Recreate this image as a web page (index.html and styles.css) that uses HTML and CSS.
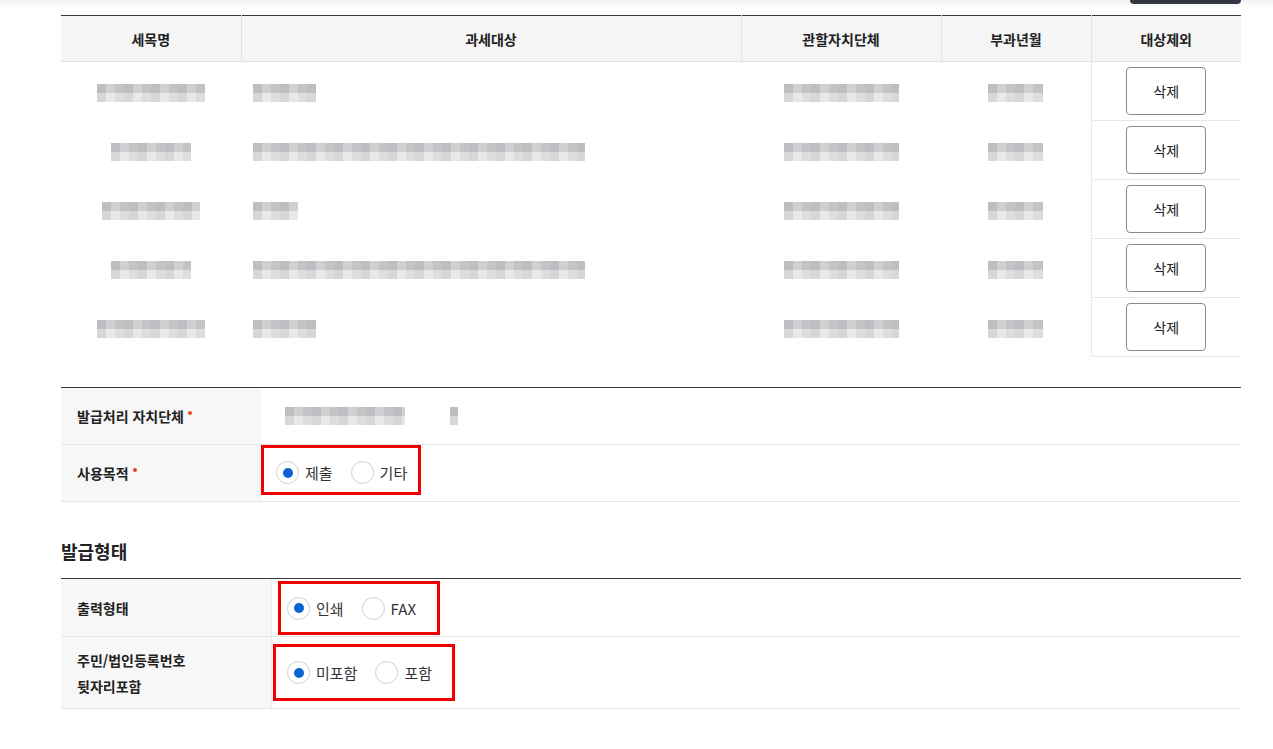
FILE: index.html
```html
<!DOCTYPE html>
<html lang="ko">
<head>
<meta charset="utf-8">
<title>발급</title>
<link rel="stylesheet" href="styles.css">
</head>
<body>
<div class="top-shade"></div>
<div class="page">
  <div class="toolbar">
    <button class="btn-dark" type="button" aria-label="전체삭제"></button>
  </div>

  <table class="list-table">
    <colgroup>
      <col class="c1"><col class="c2"><col class="c3"><col class="c4"><col class="c5">
    </colgroup>
    <thead>
      <tr>
        <th>세목명</th>
        <th>과세대상</th>
        <th>관할자치단체</th>
        <th>부과년월</th>
        <th>대상제외</th>
      </tr>
    </thead>
    <tbody>
      <tr>
        <td class="center"><span class="blur w108"></span></td>
        <td class="left"><span class="blur w63"></span></td>
        <td class="center"><span class="blur w115"></span></td>
        <td class="center"><span class="blur w55"></span></td>
        <td class="act"><button class="btn-del" type="button">삭제</button></td>
      </tr>
      <tr>
        <td class="center"><span class="blur w80"></span></td>
        <td class="left"><span class="blur w332"></span></td>
        <td class="center"><span class="blur w115"></span></td>
        <td class="center"><span class="blur w55"></span></td>
        <td class="act"><button class="btn-del" type="button">삭제</button></td>
      </tr>
      <tr>
        <td class="center"><span class="blur w98"></span></td>
        <td class="left"><span class="blur w45"></span></td>
        <td class="center"><span class="blur w115"></span></td>
        <td class="center"><span class="blur w55"></span></td>
        <td class="act"><button class="btn-del" type="button">삭제</button></td>
      </tr>
      <tr>
        <td class="center"><span class="blur w80"></span></td>
        <td class="left"><span class="blur w332"></span></td>
        <td class="center"><span class="blur w115"></span></td>
        <td class="center"><span class="blur w55"></span></td>
        <td class="act"><button class="btn-del" type="button">삭제</button></td>
      </tr>
      <tr>
        <td class="center"><span class="blur w108"></span></td>
        <td class="left"><span class="blur w63"></span></td>
        <td class="center"><span class="blur w115"></span></td>
        <td class="center"><span class="blur w55"></span></td>
        <td class="act"><button class="btn-del" type="button">삭제</button></td>
      </tr>
    </tbody>
  </table>

  <div class="form-table form-a">
    <div class="frow">
      <div class="flabel">발급처리 자치단체<span class="req"></span></div>
      <div class="fvalue pad-val">
        <span class="blur w120"></span><span class="blur w8 dot-gap"></span>
      </div>
    </div>
    <div class="frow">
      <div class="flabel">사용목적<span class="req"></span></div>
      <div class="fvalue top">
        <div class="mark mark-a">
          <label class="radio"><span class="circle on"></span>제출</label>
          <label class="radio"><span class="circle"></span>기타</label>
        </div>
      </div>
    </div>
  </div>

  <h3 class="sec-title">발급형태</h3>

  <div class="form-table form-b">
    <div class="frow r57">
      <div class="flabel">출력형태</div>
      <div class="fvalue top">
        <div class="mark mark-b">
          <label class="radio"><span class="circle on"></span>인쇄</label>
          <label class="radio"><span class="circle"></span>FAX</label>
        </div>
      </div>
    </div>
    <div class="frow r71">
      <div class="flabel two">주민/법인등록번호<br>뒷자리포함</div>
      <div class="fvalue top">
        <div class="mark mark-c">
          <label class="radio"><span class="circle on"></span>미포함</label>
          <label class="radio"><span class="circle"></span>포함</label>
        </div>
      </div>
    </div>
  </div>
</div>
</body>
</html>
```

FILE: styles.css
```css
* { box-sizing: border-box; }

html, body {
  margin: 0;
  padding: 0;
  background: #fff;
}

body {
  font-family: "Noto Sans CJK KR", "Noto Sans", sans-serif;
  color: #222;
  font-size: 14px;
  overflow: hidden;
}

.top-shade {
  position: absolute;
  left: 0;
  top: 0;
  width: 100%;
  height: 8px;
  background: linear-gradient(to bottom, rgba(0,0,0,0.06), rgba(0,0,0,0));
  pointer-events: none;
}

.page {
  width: 1180px;
  margin-left: 61px;
}

.toolbar {
  display: flex;
  justify-content: flex-end;
  margin-top: -30px;
  height: 34px;
}

.btn-dark {
  width: 111px;
  height: 34px;
  border: 0;
  border-radius: 4px;
  background: #363a47;
}

/* list table */
.list-table {
  width: 1180px;
  margin-top: 11px;
  table-layout: fixed;
  border-collapse: collapse;
  border-top: 1px solid #3a3a3a;
}

.c1 { width: 180px; }
.c2 { width: 500px; }
.c3 { width: 200px; }
.c4 { width: 150px; }
.c5 { width: 150px; }

.list-table th {
  height: 46px;
  padding: 0;
  background: #f5f5f5;
  font-size: 14px;
  font-weight: 700;
  color: #222;
  border-bottom: 1px solid #e3e3e3;
  border-left: 1px solid #e3e3e3;
}

.list-table th:first-child { border-left: 0; }

.list-table td {
  height: 59px;
  padding: 0;
  vertical-align: middle;
  border-bottom: 1px solid #fbfbfb;
}

.list-table td.center { text-align: center; }
.list-table td.left { text-align: left; padding-left: 12px; }

.list-table td.act {
  text-align: center;
  border-left: 1px solid #e6e6e6;
  border-bottom: 1px solid #e6e6e6;
}

.btn-del {
  width: 80px;
  height: 48px;
  background: #fff;
  border: 1px solid #8a8a8a;
  border-radius: 4px;
  font-family: inherit;
  font-size: 14px;
  color: #222;
  vertical-align: middle;
}

/* pixelated blur */
.blur {
  display: inline-block;
  height: 18px;
  vertical-align: middle;
  background:
    repeating-linear-gradient(90deg, rgba(80,80,90,0.10) 0 9px, rgba(255,255,255,0.10) 9px 18px, rgba(60,60,60,0.05) 18px 27px),
    linear-gradient(to bottom, #cacbcd 0 50%, #e6e6e8 50% 100%);
}

.w8 { width: 8px; }
.w45 { width: 45px; }
.w55 { width: 55px; }
.w63 { width: 63px; }
.w80 { width: 80px; }
.w98 { width: 98px; }
.w108 { width: 108px; }
.w115 { width: 115px; }
.w120 { width: 120px; }
.w332 { width: 332px; }

.dot-gap { margin-left: 45px; }

/* form tables */
.form-table {
  border-top: 1px solid #3a3a3a;
}

.form-a { margin-top: 30px; }

.frow {
  display: flex;
  min-height: 57px;
  border-bottom: 1px solid #e6e6e6;
}

.form-b .r57 { min-height: 58px; }
.form-b .r71 { min-height: 72px; }

.flabel {
  flex: none;
  width: 200px;
  display: flex;
  align-items: center;
  padding: 0 16px;
  background: #f7f7f7;
  font-size: 14px;
  font-weight: 700;
  color: #222;
}

.form-b .flabel { width: 211px; border-right: 1px solid #ececec; }

.flabel.two {
  display: block;
  padding-top: 10px;
  line-height: 26px;
}

.req {
  flex: none;
  width: 4px;
  height: 4px;
  border-radius: 50%;
  background: #e5471d;
  margin: 0 0 7px 4px;
}

.fvalue {
  flex: 1;
  display: flex;
  align-items: center;
}

.fvalue.top { align-items: flex-start; }

.pad-val { padding-left: 24px; }

.sec-title {
  margin: 36px 0 14px;
  font-size: 18px;
  line-height: 26px;
  font-weight: 700;
  color: #222;
}

/* annotation boxes */
.mark {
  display: flex;
  align-items: center;
  border: 3px solid #f00000;
}

.mark-a {
  height: 50px;
  padding: 5px 11px 0 12px;
}

.mark-b {
  height: 54px;
  margin: 2px 0 0 6px;
  padding: 0 21px 0 6px;
}

.mark-c {
  height: 57px;
  margin: 7px 0 0 1px;
  padding: 0 20px 0 11px;
}

.radio {
  display: inline-flex;
  align-items: center;
  gap: 6px;
  margin-right: 18px;
  font-size: 15px;
  color: #333;
}

.radio:last-child { margin-right: 0; }

.circle {
  position: relative;
  width: 23px;
  height: 23px;
  border: 1px solid #cfcfcf;
  border-radius: 50%;
  background: #fff;
}

.circle.on::after {
  content: "";
  position: absolute;
  left: 50%;
  top: 50%;
  width: 10px;
  height: 10px;
  margin: -5px 0 0 -5px;
  border-radius: 50%;
  background: #0a64d0;
}
```
